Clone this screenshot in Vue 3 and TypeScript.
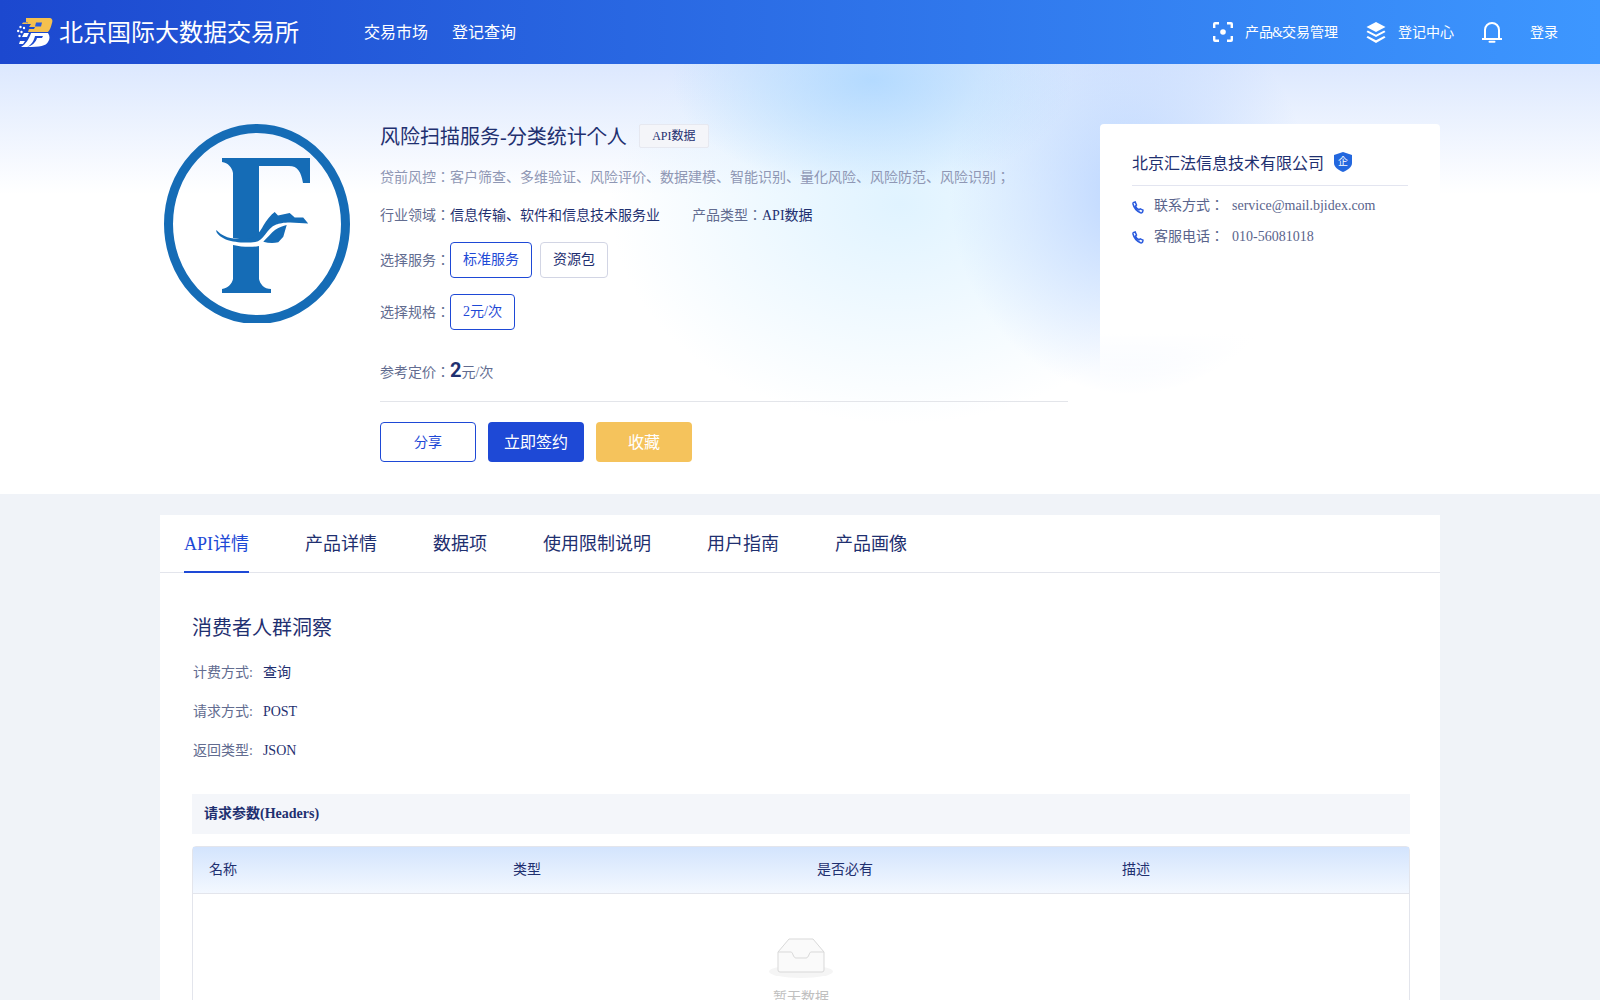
<script setup lang="ts">
import { ref } from "vue";

const navs = ["交易市场", "登记查询"];
const services = ["标准服务", "资源包"];
const tabs = ["API详情", "产品详情", "数据项", "使用限制说明", "用户指南", "产品画像"];
const metas = [
  { label: "计费方式", value: "查询" },
  { label: "请求方式", value: "POST" },
  { label: "返回类型", value: "JSON" },
];
const columns = ["名称", "类型", "是否必有", "描述"];
const contacts = [
  { label: "联系方式：", value: "service@mail.bjidex.com" },
  { label: "客服电话：", value: "010-56081018" },
];
const activeTab = ref(0);
const activeService = ref(0);
</script>

<template>
  <div class="page">
    <header class="top">
      <div class="brand">
        <svg class="brand-logo" viewBox="0 0 36 31">
          <path d="M9 1h23c3 0 4 2 3 5-1 4-2 7-4 9H11l1-3h5l1-2h-6l2-3H9z" fill="#f5c04e" />
          <path d="M19 5.500h6l-1 4h-6zM6 5h5l-1 2H5z" fill="#2a5ade" />
          <path d="M6 5.500h5l-1 1.500H5z" fill="#f5c04e" />
          <path d="M14 16h17c2 3 2 6 0 9-2 4-8 5-21 5 5-1 9-5 10-9h5l1-2h-8c-1 5-4 9-8 11H4c5-3 8-8 10-14z" fill="#fff" />
          <path d="M7 16h5l-2 4H5zM3 24h5l-2 3H2z" fill="#fff" />
          <circle cx="3.500" cy="10" r="1.200" fill="#fff" />
          <circle cx="7" cy="11" r="1.200" fill="#fff" />
          <circle cx="1.200" cy="14" r="1.200" fill="#fff" />
          <circle cx="4.500" cy="15" r="1.200" fill="#fff" />
          <circle cx="2.500" cy="19" r="1.200" fill="#fff" />
        </svg>
        <span class="brand-name">北京国际大数据交易所</span>
      </div>
      <nav class="nav">
        <a v-for="n in navs" :key="n">{{ n }}</a>
      </nav>
      <div class="top-right">
        <div class="top-item">
          <svg class="ic-20" viewBox="0 0 20 20" fill="none" stroke="#fff" stroke-width="2.400">
            <path d="M1.200 6V2q0-.8.8-.8h4M14 1.200h4q.8 0 .8.8v4M18.800 14v4q0 .8-.8.8h-4M6 18.800H2q-.8 0-.8-.8v-4" />
            <circle cx="10" cy="10" r="2.800" fill="#fff" stroke="none" />
          </svg>
          <span>产品<i class="amp">&amp;</i>交易管理</span>
        </div>
        <div class="top-item">
          <svg class="ic-stack" viewBox="0 0 20 21" fill="#fff">
            <path d="M10 0l9.500 5-9.500 5-9.500-5z" />
            <path d="M1.800 8.500l8.200 4.300 8.200-4.300 1.300 1.500-9.500 5-9.500-5z" />
            <path d="M1.800 14l8.200 4.300 8.200-4.300 1.300 1.500-9.500 5.500-9.500-5.500z" />
          </svg>
          <span>登记中心</span>
        </div>
        <svg class="bell" viewBox="0 0 20 22" fill="none" stroke="#fff" stroke-width="2">
          <path d="M0 18h20M3 18V9a7 7 0 0 1 14 0v9" />
          <path d="M7.500 20.800h5" stroke-linecap="round" />
        </svg>
        <span class="login">登录</span>
      </div>
    </header>

    <section class="hero">
      <div class="hero-inner">
        <svg class="product-logo" viewBox="0 0 186 199">
          <ellipse cx="93" cy="100" rx="88.500" ry="95.500" fill="none" stroke="#156cb6" stroke-width="9" />
          <path d="M58 34h88v25h-7c-2-11-5-17-14-17H95v73.500c-8 1.500-17 0-26-1.500V49c-1-6-5-10-11-11z" fill="#156cb6" />
          <path d="M69 121c9 2 18 2.500 26 1v33c1 5 5 10 12 10v4H58v-4c6-1 10-5 11-10z" fill="#156cb6" />
          <path d="M52.700 106c1 2 8 8 17 8.500 8 1 17 1 20-1.500 5-3 8-8 10-12 3-5 7-10 11-13l3.300 3.500 11.700-2.500 5 4.400h8.500l5 6-18-1c-7 0-11 1-14 2-5 2-8 6-11 10-3 4-6 7-10 7.500-10 1.500-22 0-28-2-5-2-10-5-11-9z" fill="#156cb6" />
          <path d="M99.300 117.700c4-4 8-9 12-12 4-2.500 8-4 11.400-4.700l-3.400 11.700-5 5.600c-5 1-10 .8-15-.6z" fill="#156cb6" />
        </svg>

        <div class="info">
          <div class="title-row">
            <h1>风险扫描服务-分类统计个人</h1>
            <span class="tag">API数据</span>
          </div>
          <p class="desc">贷前风控：客户筛查、多维验证、风险评价、数据建模、智能识别、量化风险、风险防范、风险识别；</p>
          <div class="field-row">
            <span><i>行业领域：</i>信息传输、软件和信息技术服务业</span>
            <span class="field-second"><i>产品类型：</i>API数据</span>
          </div>
          <div class="select-row">
            <i>选择服务：</i>
            <button
              v-for="(s, idx) in services"
              :key="s"
              :class="['opt', { on: idx === activeService }]"
              @click="activeService = idx"
            >{{ s }}</button>
          </div>
          <div class="select-row">
            <i>选择规格：</i>
            <button class="opt on">2元/次</button>
          </div>
          <div class="price-row">
            <i>参考定价：</i><b>2</b><i>元/次</i>
          </div>
          <div class="actions">
            <button class="act ghost">分享</button>
            <button class="act primary">立即签约</button>
            <button class="act gold">收藏</button>
          </div>
        </div>

        <aside class="company">
          <div class="company-title">
            <span>北京汇法信息技术有限公司</span>
            <span class="shield">
              <svg viewBox="0 0 18 20"><path d="M9 0l9 3v8c0 4-4 7-9 9-5-2-9-5-9-9V3z" fill="#2367de" /></svg>
              <em>企</em>
            </span>
          </div>
          <div v-for="c in contacts" :key="c.label" class="contact">
            <svg viewBox="0 0 13 13" fill="none" stroke="#2a5ade" stroke-width="1.500">
              <path d="M1.200 1.800l2-.8 1.300 3-1 1c.5 1.800 1.800 3 3.500 3.800l1.200-1 2.800 1.400-.5 2c-.2.400-1 .8-2 .6C4.500 10 2 7 1 3c-.1-.5 0-1 .2-1.200z" />
            </svg>
            <span class="contact-label">{{ c.label }}</span>
            <span>{{ c.value }}</span>
          </div>
        </aside>
      </div>
    </section>

    <main class="detail">
      <div class="tabs">
        <a
          v-for="(t, idx) in tabs"
          :key="t"
          :class="{ on: idx === activeTab }"
          @click="activeTab = idx"
        >{{ t }}</a>
      </div>
      <div class="detail-body">
        <h2>消费者人群洞察</h2>
        <div v-for="m in metas" :key="m.label" class="meta">
          <i>{{ m.label }}:</i>
          <span>{{ m.value }}</span>
        </div>
        <div class="block-title">请求参数(Headers)</div>
        <div class="table">
          <div class="thead">
            <div v-for="c in columns" :key="c">{{ c }}</div>
          </div>
          <div class="empty">
            <svg viewBox="0 0 64 41" fill="none">
              <ellipse cx="32" cy="34.500" rx="32" ry="6.500" fill="#f5f5f5" />
              <path d="M9 15L20 2h24l11 13v18q0 2-2 2H11q-2 0-2-2z" fill="#fafafa" stroke="#d9d9d9" />
              <path d="M9 15h13c2 0 2 6 5 6h10c3 0 3-6 5-6h13" stroke="#d9d9d9" />
            </svg>
            <span>暂无数据</span>
          </div>
        </div>
      </div>
    </main>
  </div>
</template>

<style>
html, body {
  margin: 0;
  overflow: hidden;
  background: #f0f3f8;
}
</style>

<style scoped>
.page {
  width: 1600px;
  height: 1000px;
  overflow: hidden;
  font-family: "Liberation Serif", "Noto Sans CJK JP", serif;
  color: #1f3070;
  font-size: 14px;
}

i, em {
  font-style: normal;
}

.top {
  display: flex;
  align-items: center;
  height: 64px;
  padding: 0 42px 0 17px;
  color: #fff;
  background: linear-gradient(90deg, #1c48cf, #3d97ff);
}

.brand {
  display: flex;
  align-items: center;
  gap: 6px;
}

.brand-logo {
  width: 36px;
  height: 31px;
}

.brand-name {
  margin-bottom: 3px;
  font-size: 24px;
}

.nav {
  display: flex;
  gap: 24px;
  margin-bottom: 2px;
  margin-left: 65px;
  font-size: 16px;
}

.top-right {
  display: flex;
  align-items: center;
  margin-left: auto;
}

.top-item {
  display: flex;
  align-items: center;
  gap: 12px;
  margin-right: 28px;
}

.top-item span, .login {
  margin-bottom: 2px;
}

.amp {
  margin: 0 -1px;
}

.ic-20 {
  width: 20px;
  height: 20px;
}

.ic-stack {
  width: 20px;
  height: 21px;
}

.bell {
  width: 20px;
  height: 22px;
  margin-right: 28px;
}

.hero {
  height: 430px;
  background:
    radial-gradient(ellipse 200px 110px at 872px 16px, rgba(175, 216, 255, 0.9), rgba(175, 216, 255, 0) 100%),
    radial-gradient(ellipse 180px 200px at 1130px 130px, rgba(185, 212, 255, 0.95), rgba(185, 212, 255, 0) 100%),
    radial-gradient(ellipse 290px 220px at 900px 140px, rgba(216, 240, 255, 0.8), rgba(216, 240, 255, 0) 100%),
    linear-gradient(180deg, #dce8fe 0, #fff 130px);
}

.hero-inner {
  display: flex;
  width: 1280px;
  margin: 0 auto;
  padding-top: 60px;
}

.product-logo {
  flex: none;
  width: 186px;
  height: 199px;
  margin-left: 4px;
}

.info {
  flex: none;
  width: 688px;
  margin-left: 30px;
}

.info i {
  color: #626c90;
}

.title-row {
  display: flex;
  align-items: center;
  gap: 12px;
  height: 24px;
}

h1 {
  margin: 0 0 2px;
  font-size: 20px;
  font-weight: 400;
}

.tag {
  padding: 0 12.5px;
  height: 22px;
  line-height: 22px;
  font-size: 12px;
  background: #f4f5f9;
  border: 1px solid #e6e8f0;
  border-radius: 2px;
}

.desc {
  margin: 20px 0 0;
  line-height: 20px;
  color: #8f97b4;
}

.field-row {
  margin-top: 18px;
  line-height: 20px;
}

.field-second {
  margin-left: 32px;
}

.select-row {
  display: flex;
  align-items: center;
  gap: 8px;
  margin-top: 16px;
}

.select-row i {
  margin-right: -8px;
  margin-bottom: 3px;
}

.opt {
  height: 36px;
  padding: 0 12px 4px;
  font: inherit;
  color: #1f3070;
  background: transparent;
  border: 1px solid #d2d5e4;
  border-radius: 4px;
}

.opt.on {
  color: #1e49d6;
  border-color: #1e49d6;
}

.price-row {
  display: flex;
  align-items: baseline;
  margin-top: 28px;
  padding-bottom: 19px;
  border-bottom: 1px solid #e3e5ea;
}

.price-row b {
  font-family: Roboto, sans-serif;
  font-size: 20px;
}

.actions {
  display: flex;
  gap: 12px;
  margin-top: 20px;
}

.act {
  width: 96px;
  height: 40px;
  padding: 0 0 2px;
  font: inherit;
  font-size: 16px;
  color: #fff;
  border: 1px solid transparent;
  border-radius: 4px;
}

.act.ghost {
  font-size: 14px;
  color: #1e49d6;
  background: #fff;
  border-color: #1e49d6;
}

.act.primary {
  background: #1e49d6;
}

.act.gold {
  background: #f5c35c;
}

.company {
  box-sizing: border-box;
  flex: none;
  width: 340px;
  height: 280px;
  margin-left: 32px;
  padding: 26px 32px;
  background: linear-gradient(180deg, #fff 0, #fff 75%, rgba(255, 255, 255, 0) 100%);
  border-radius: 4px;
}

.company-title {
  display: flex;
  align-items: center;
  gap: 10px;
  height: 24px;
  padding-bottom: 11px;
  margin-bottom: 5px;
  font-size: 16px;
  border-bottom: 1px solid #e3e5f0;
}

.shield {
  position: relative;
  display: flex;
  width: 18px;
  height: 20px;
}

.shield svg {
  width: 18px;
  height: 20px;
}

.shield em {
  position: absolute;
  inset: 0;
  font-size: 10px;
  line-height: 20px;
  text-align: center;
  color: #fff;
}

.contact {
  display: flex;
  align-items: baseline;
  height: 30.5px;
  line-height: 30px;
  color: #5a648c;
}

.contact svg {
  align-self: center;
  width: 13px;
  height: 13px;
  margin: 2px 9px 0 0;
}

.contact-label {
  margin-right: 8px;
}

.detail {
  width: 1280px;
  margin: 21px auto 0;
  background: #fff;
}

.tabs {
  display: flex;
  gap: 56px;
  height: 57px;
  padding-left: 24px;
  font-size: 18px;
  border-bottom: 1px solid #e3e5ec;
}

.tabs a {
  box-sizing: border-box;
  height: 58px;
  line-height: 58px;
}

.tabs a.on {
  color: #1e49d6;
  border-bottom: 2px solid #1e49d6;
}

.detail-body {
  padding: 41px 30px 40px 32px;
}

h2 {
  margin: 0 0 11px;
  font-size: 20px;
  line-height: 28px;
  font-weight: 400;
}

.meta {
  display: flex;
  align-items: baseline;
  gap: 10px;
  height: 39px;
  line-height: 39px;
  padding-left: 1px;
}

.meta i {
  color: #626c90;
}

.block-title {
  margin-top: 24px;
  height: 40px;
  line-height: 40px;
  padding-left: 12px;
  font-weight: 700;
  background: #f4f6fa;
}

.table {
  margin-top: 12px;
  border: 1px solid #e3e5ec;
  border-radius: 4px;
}

.thead {
  display: grid;
  grid-template-columns: 304px 304px 305px 1fr;
  height: 46px;
  line-height: 46px;
  background: linear-gradient(180deg, #d3e4fd, #f3f8ff);
  border-bottom: 1px solid #e3e5ec;
}

.thead div {
  padding-left: 16px;
}

.empty {
  display: flex;
  flex-direction: column;
  align-items: center;
  padding: 43px 0 40px;
  color: #bfbfbf;
}

.empty svg {
  width: 64px;
  height: 41px;
  margin-bottom: 8px;
}
</style>
